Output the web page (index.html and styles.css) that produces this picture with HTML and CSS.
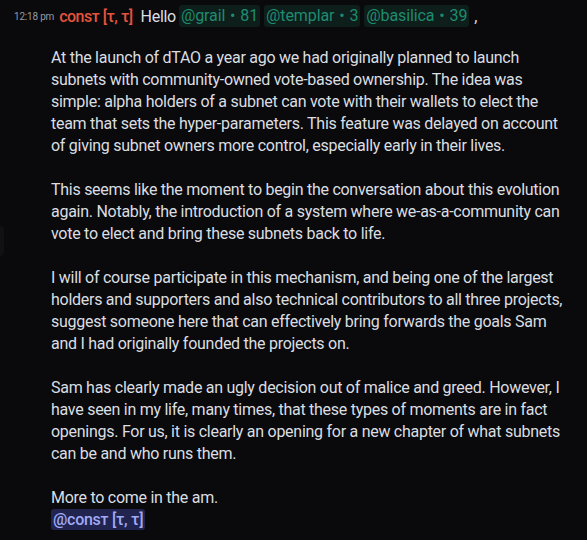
FILE: index.html
```html
<!DOCTYPE html>
<html>
<head>
<meta charset="utf-8">
<link rel="stylesheet" href="styles.css">
</head>
<body>
<div class="message">
  <div class="edge"></div>
  <div class="header">
    <span class="time">12:18 pm</span>
    <span class="user">consт [τ, τ]</span>
    <span class="hello">Hello</span>
    <span class="role">@grail • 81</span>
    <span class="role">@templar • 3</span>
    <span class="role">@basilica • 39</span>
    <span class="comma">,</span>
  </div>
  <div class="body">
    <p>At the launch of dTAO a year ago we had originally planned to launch<br>subnets with community-owned vote-based ownership. The idea was<br>simple: alpha holders of a subnet can vote with their wallets to elect the<br>team that sets the hyper-parameters. This feature was delayed on account<br>of giving subnet owners more control, especially early in their lives.</p>
    <p>This seems like the moment to begin the conversation about this evolution<br>again. Notably, the introduction of a system where we-as-a-community can<br>vote to elect and bring these subnets back to life.</p>
    <p>I will of course participate in this mechanism, and being one of the largest<br>holders and supporters and also technical contributors to all three projects,<br>suggest someone here that can effectively bring forwards the goals Sam<br>and I had originally founded the projects on.</p>
    <p>Sam has clearly made an ugly decision out of malice and greed. However, I<br>have seen in my life, many times, that these types of moments are in fact<br>openings. For us, it is clearly an opening for a new chapter of what subnets<br>can be and who runs them.</p>
    <p class="last">More to come in the am.<br><span class="mention">@consт [τ, τ]</span></p>
  </div>
</div>
</body>
</html>
```
FILE: styles.css
```css
html, body {
  margin: 0;
  padding: 0;
  background: #0a0a0c;
}
body {
  font-family: Roboto, "Noto Sans", sans-serif;
  color: #dbdee1;
  width: 587px;
  height: 540px;
  overflow: hidden;
}
.message {
  position: relative;
  padding: 4px 0 0 14px;
}
.edge {
  position: absolute;
  left: -4px;
  top: 226px;
  width: 8px;
  height: 30px;
  border-radius: 4px;
  background: #111114;
}
.header {
  display: flex;
  align-items: center;
  height: 24px;
  white-space: nowrap;
}
.time {
  font-size: 10px;
  letter-spacing: -0.2px;
  color: #949ba4;
  margin-right: 5px;
  padding-top: 1px;
}
.user {
  font-size: 16px;
  font-weight: 500;
  letter-spacing: -0.5px;
  color: #e5533d;
  margin-right: 8px;
}
.hello {
  font-size: 16px;
  letter-spacing: -0.3px;
  color: #dbdee1;
  margin-right: 3px;
}
.role {
  font-size: 16px;
  color: #1f8c6f;
  background: #0d1e1b;
  border-radius: 3px;
  padding: 0 2px;
  line-height: 22px;
  margin-right: 4px;
  word-spacing: 1px;
  letter-spacing: -0.1px;
}
.comma {
  font-size: 16px;
  margin-left: 1px;
}
.body {
  padding-left: 37px;
  padding-top: 19px;
  font-size: 16px;
  line-height: 22px;
  letter-spacing: -0.27px;
}
.body p {
  margin: 0 0 22px 0;
  white-space: nowrap;
}
.body p.last {
  margin: 0;
}
.mention {
  background: #20244f;
  color: #a0aaf5;
  border-radius: 3px;
  padding: 1px 2px;
  font-weight: 500;
}
```
